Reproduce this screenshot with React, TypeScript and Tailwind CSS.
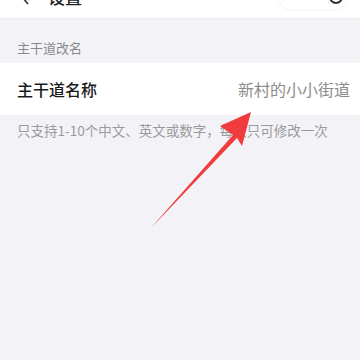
import React from "react";

const font = { fontFamily: '"Noto Sans CJK SC", "Noto Sans", sans-serif' };

export default function App() {
  return (
    <div className="relative w-[360px] h-[360px] overflow-hidden bg-[#f3f3f7]" style={font}>
      {/* header, mostly scrolled off the top */}
      <div className="-mt-[25px] h-[44px] bg-white border-b border-[#ececf0] flex items-center pl-[20px] pr-[12px]">
        <svg width="10" height="16" viewBox="0 0 10 16" className="mr-[18px]">
          <path d="M8 1L2 8l6 7" fill="none" stroke="#333" strokeWidth="1.6" />
        </svg>
        <span className="text-[17px] font-medium text-[#222]">设置</span>
        <div className="ml-auto flex items-center h-[28px] w-[70px] rounded-full border border-[#f5f5f5] pl-[10px] pr-[4px]">
          <span className="text-[#e6e6e6] text-[12px] tracking-[1px]">···</span>
          <span className="mx-auto h-[14px] w-px bg-[#f0f0f0]" />
          <span className="w-[15px] h-[15px] rounded-full border-2 border-[#333] flex items-center justify-center">
            <span className="w-[5px] h-[5px] rounded-full bg-[#333]" />
          </span>
        </div>
      </div>

      <div className="px-[17px] pt-[19px] pb-[5px] text-[13px] text-[#8a8a8e]">主干道改名</div>

      <div className="bg-white h-[52px] pl-[17px] pr-[10px] flex items-center justify-between">
        <span className="text-[16px] font-medium text-[#1a1a1a]">主干道名称</span>
        <span className="text-[16px] text-[#8c8c8c]">新村的小小街道</span>
      </div>

      <div className="px-[17px] pt-[5px] text-[13.5px] text-[#9a9a9e]">
        只支持1-10个中文、英文或数字，每天只可修改一次
      </div>

      <svg className="absolute left-0 top-0" width="360" height="360" viewBox="0 0 360 360">
        <path d="M150 229 L233 135 L220 126 L251 112 L242 146 L237 138 Z" fill="#f03c3c" />
      </svg>
    </div>
  );
}
